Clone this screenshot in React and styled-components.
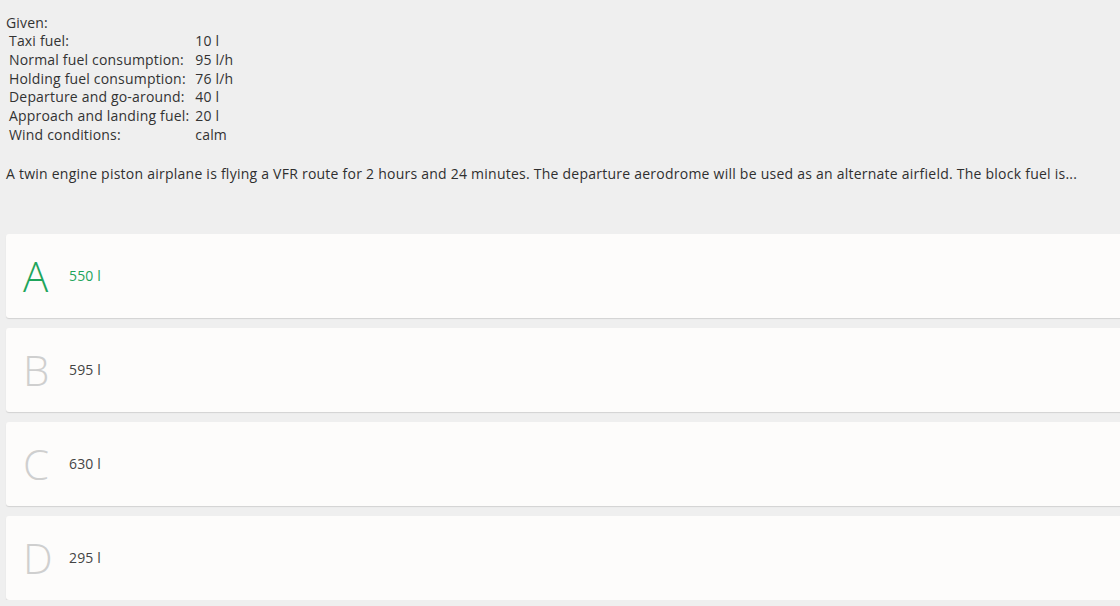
import React from "react";
import styled, { createGlobalStyle } from "styled-components";

const Global = createGlobalStyle`
  html, body { margin: 0; padding: 0; background: #efefef; overflow: hidden; }
  body { font-family: "Open Sans", "Noto Sans", sans-serif; color: #333; }
`;

const Page = styled.div`
  padding: 13px 0 0 6px;
  font-size: 14px;
  letter-spacing: 0.18px;
  line-height: 19px;
`;

const Label = styled.div`
  margin: 0;
`;

const GivenTable = styled.table`
  border-spacing: 2px 0;
  margin-left: 1px;
  font-size: 14px;
  td { padding: 0; line-height: 18.8px; vertical-align: top; }
  td:first-child { padding-right: 4px; }
`;

const Question = styled.p`
  margin: 19px 0 0;
  line-height: 19px;
  letter-spacing: 0.24px;
  color: #2f2f2f;
`;

const Answers = styled.div`
  margin-top: 51px;
  display: flex;
  flex-direction: column;
  gap: 10px;
  margin-right: -20px;
`;

const Card = styled.div`
  height: 84px;
  background: #fdfcfb;
  border-radius: 3px;
  box-shadow: 0 1px 1px rgba(0,0,0,0.12);
  display: flex;
  align-items: center;
  padding-left: 17px;
`;

const Letter = styled.span`
  font-family: "Open Sans", sans-serif;
  font-weight: 300;
  font-size: 42px;
  letter-spacing: 0;
  width: 46px;
  color: ${p => (p.$correct ? "#1fa55c" : "#cfcfcf")};
  line-height: 1;
`;

const Value = styled.span`
  font-size: 14px;
  color: ${p => (p.$correct ? "#1fa55c" : "#444")};
`;

const given = [
  ["Taxi fuel:", "10 l"],
  ["Normal fuel consumption:", "95 l/h"],
  ["Holding fuel consumption:", "76 l/h"],
  ["Departure and go-around:", "40 l"],
  ["Approach and landing fuel:", "20 l"],
  ["Wind conditions:", "calm"],
];

const answers = [
  ["A", "550 l", true],
  ["B", "595 l", false],
  ["C", "630 l", false],
  ["D", "295 l", false],
];

export default function App() {
  return (
    <>
      <Global />
      <Page>
        <Label>Given:</Label>
        <GivenTable>
          <tbody>
            {given.map(([k, v]) => (
              <tr key={k}>
                <td>{k}</td>
                <td>{v}</td>
              </tr>
            ))}
          </tbody>
        </GivenTable>
        <Question>
          A twin engine piston airplane is flying a VFR route for 2 hours and 24 minutes. The departure aerodrome will be used as an alternate airfield. The block fuel is...
        </Question>
        <Answers>
          {answers.map(([l, v, c]) => (
            <Card key={l}>
              <Letter $correct={c}>{l}</Letter>
              <Value $correct={c}>{v}</Value>
            </Card>
          ))}
        </Answers>
      </Page>
    </>
  );
}
